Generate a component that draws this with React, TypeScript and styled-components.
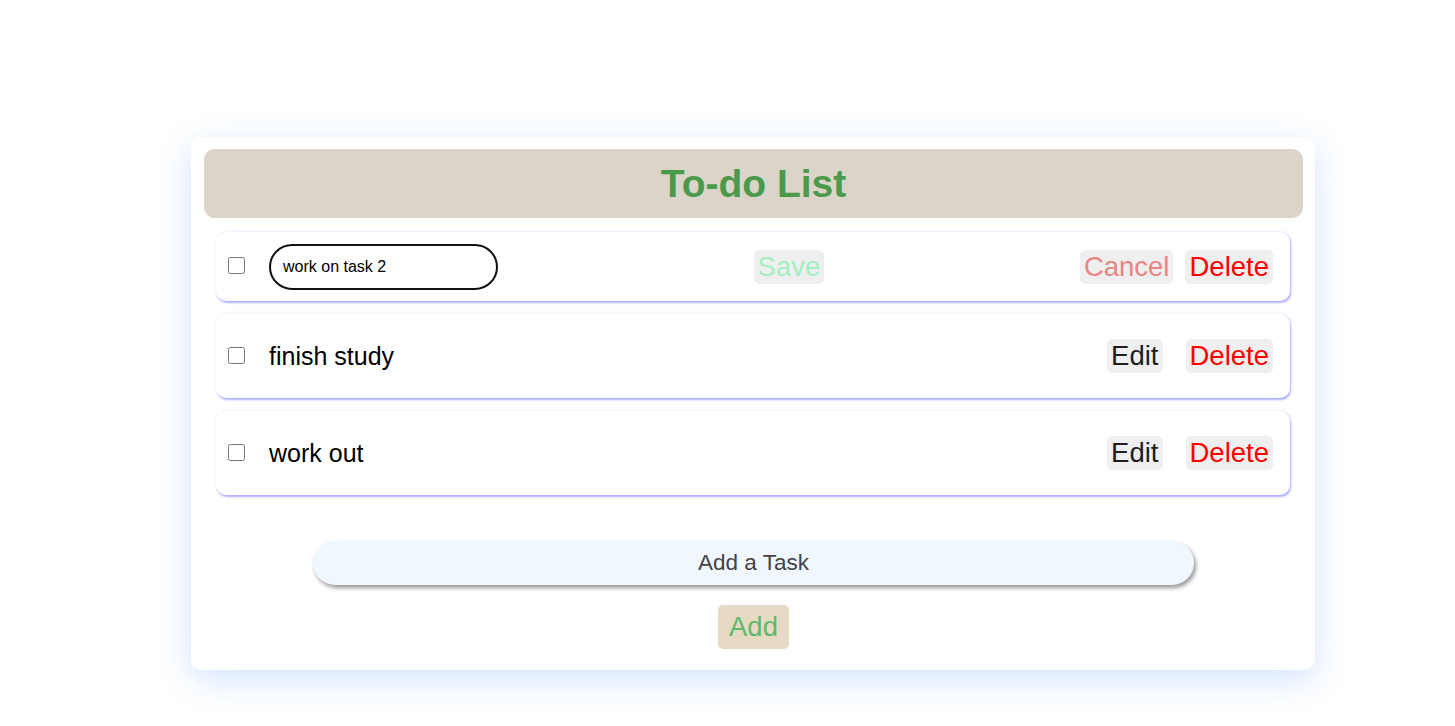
import React, { useState } from "react";
import styled, { createGlobalStyle } from "styled-components";

type Task = { id: number; text: string; done: boolean };

const App = () => {
  const [tasks] = useState<Task[]>([
    { id: 1, text: "work on task 2", done: false },
    { id: 2, text: "finish study", done: false },
    { id: 3, text: "work out", done: false },
  ]);
  const [editingId] = useState<number>(1);
  const [draft, setDraft] = useState("work on task 2");
  const [newTask, setNewTask] = useState("");

  return (
    <Page>
      <GlobalStyle />
      <Card>
        <Header>To-do List</Header>
        <List>
          {tasks.map((task) => {
            const editing = task.id === editingId;
            return (
              <Row key={task.id} $editing={editing}>
                <Left>
                  <Check type="checkbox" defaultChecked={task.done} />
                  {editing ? (
                    <EditInput value={draft} onChange={(e) => setDraft(e.target.value)} />
                  ) : (
                    <TaskText>{task.text}</TaskText>
                  )}
                </Left>
                {editing && <ActionButton $color="#a3efbf">Save</ActionButton>}
                <Actions $gap={editing ? 12 : 23}>
                  {editing ? (
                    <ActionButton $color="#e98585">Cancel</ActionButton>
                  ) : (
                    <ActionButton $color="#1e1e1e">Edit</ActionButton>
                  )}
                  <ActionButton $color="#ff0000">Delete</ActionButton>
                </Actions>
              </Row>
            );
          })}
        </List>
        <AddArea>
          <AddInput
            placeholder="Add a Task"
            value={newTask}
            onChange={(e) => setNewTask(e.target.value)}
          />
          <AddButton>Add</AddButton>
        </AddArea>
      </Card>
    </Page>
  );
};

const GlobalStyle = createGlobalStyle`
  html, body {
    margin: 0;
    background: #ffffff;
    font-family: "Liberation Sans", Arial, sans-serif;
  }
`;

const Page = styled.div`
  min-height: 726px;
  box-sizing: border-box;
  padding: 137px 0 56px 191px;
`;

const Card = styled.div`
  width: 1124px;
  padding: 12px 12px 21px 13px;
  box-sizing: border-box;
  background: #fff;
  border-radius: 11px;
  box-shadow: 0 9px 34px rgba(30, 115, 240, 0.2);
`;

const Header = styled.h1`
  margin: 0;
  height: 69px;
  display: flex;
  align-items: center;
  justify-content: center;
  background: #dbd4c9;
  border-radius: 11px;
  color: #4b9a4c;
  font-size: 39px;
  font-weight: bold;
`;

const List = styled.div`
  display: flex;
  flex-direction: column;
  gap: 13px;
  margin: 14px 13px 0 12px;
`;

const Row = styled.div<{ $editing: boolean }>`
  height: ${(p) => (p.$editing ? 69 : 84)}px;
  display: flex;
  align-items: center;
  justify-content: space-between;
  padding: 0 17px 0 12px;
  background: #fff;
  border-radius: 10px;
  box-shadow: 1px 1.5px 2px rgba(110, 110, 255, 0.55), 0 -1px 2px rgba(120, 120, 255, 0.08);
`;

const Left = styled.div`
  display: flex;
  align-items: center;
  gap: 24px;
`;

const Check = styled.input`
  width: 17px;
  height: 17px;
  margin: 0 0 2px 0;
`;

const EditInput = styled.input`
  width: 229px;
  height: 46px;
  box-sizing: border-box;
  border: 2px solid #111;
  border-radius: 23px;
  padding: 0 12px;
  font-size: 16px;
  font-family: "Liberation Sans", Arial, sans-serif;
  color: #000;
  outline: none;
`;

const TaskText = styled.span`
  font-size: 25px;
  color: #000;
`;

const Actions = styled.div<{ $gap: number }>`
  display: flex;
  align-items: center;
  gap: ${(p) => p.$gap}px;
`;

const ActionButton = styled.button<{ $color: string }>`
  height: 34px;
  padding: 0 4px;
  border: none;
  border-radius: 5px;
  background: #efefef;
  color: ${(p) => p.$color};
  font-size: 27.5px;
  font-family: "Liberation Sans", Arial, sans-serif;
  cursor: pointer;
`;

const AddArea = styled.div`
  display: flex;
  flex-direction: column;
  align-items: center;
  gap: 20px;
  margin-top: 46px;
`;

const AddInput = styled.input`
  width: 881px;
  height: 44px;
  box-sizing: border-box;
  border: none;
  border-radius: 22px;
  background: #f1f7fe;
  box-shadow: 2px 3px 4px rgba(0, 0, 0, 0.4);
  text-align: center;
  font-size: 22.5px;
  font-family: "Liberation Sans", Arial, sans-serif;
  outline: none;
  &::placeholder {
    color: #444;
  }
`;

const AddButton = styled.button`
  height: 44px;
  padding: 0 11px;
  border: none;
  border-radius: 5px;
  background: #e7dac4;
  color: #5dba6a;
  font-size: 27.5px;
  font-family: "Liberation Sans", Arial, sans-serif;
  cursor: pointer;
`;

export default App;
